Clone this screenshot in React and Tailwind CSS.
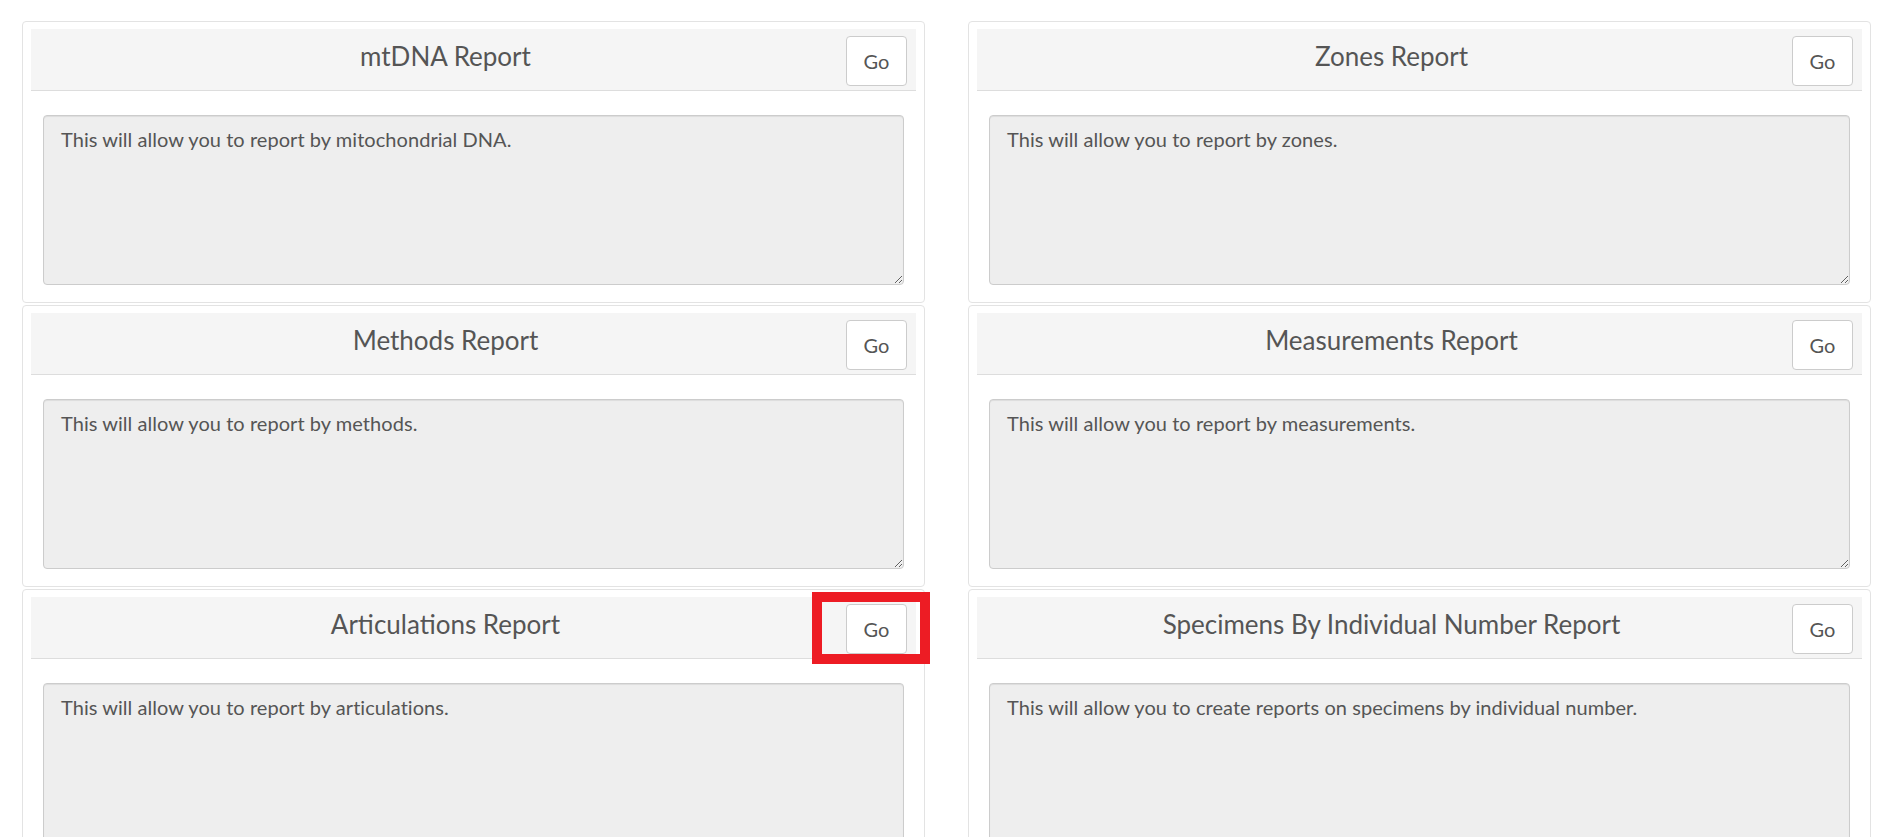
import React from 'react';

const reports = [
    { title: 'mtDNA Report', text: 'This will allow you to report by mitochondrial DNA.' },
    { title: 'Zones Report', text: 'This will allow you to report by zones.' },
    { title: 'Methods Report', text: 'This will allow you to report by methods.' },
    { title: 'Measurements Report', text: 'This will allow you to report by measurements.' },
    { title: 'Articulations Report', text: 'This will allow you to report by articulations.', marked: true },
    {
        title: 'Specimens By Individual Number Report',
        text: 'This will allow you to create reports on specimens by individual number.',
    },
];

function ReportPanel({ report }) {
    return (
        <div className="border border-[#e3e3e3] rounded-[4px] px-[8px] pt-[7px] pb-[17px]">
            {/* Heading */}
            <div className="flex h-[62px] bg-[#f5f5f5] border-b border-[#dddddd]">
                <div className="flex-1 pl-[14px] pt-[10px] text-center text-[26px] leading-[34px] text-[#555555]">
                    {report.title}
                </div>
                <div className="relative mt-[7px] mr-[9px]">
                    <button className="w-[61px] h-[50px] bg-white border border-[#cccccc] rounded-[4px] text-[20px] text-[#555555]">
                        Go
                    </button>
                    {report.marked && (
                        <div className="absolute left-[-34px] top-[-12px] w-[118px] h-[72px] border-[10px] border-[#ed1c24]" />
                    )}
                </div>
            </div>

            {/* Description */}
            <div className="px-[12px] pt-[24px]">
                <textarea
                    readOnly
                    value={report.text}
                    className="block w-full h-[170px] bg-[#eeeeee] border border-[#cccccc] rounded-[4px] shadow-[inset_0_1px_1px_rgba(0,0,0,0.075)] pl-[17px] pr-[16px] pt-[9px] text-[20px] tracking-[0.05px] leading-[28px] text-[#555555] outline-none"
                />
            </div>
        </div>
    );
}

export default function App() {
    return (
        <div className="h-screen overflow-hidden bg-white font-['Lato',sans-serif]">
            <div className="grid grid-cols-2 gap-x-[43px] gap-y-[2px] pl-[22px] pr-[20px] pt-[21px]">
                {reports.map((report) => (
                    <ReportPanel key={report.title} report={report} />
                ))}
            </div>
        </div>
    );
}
